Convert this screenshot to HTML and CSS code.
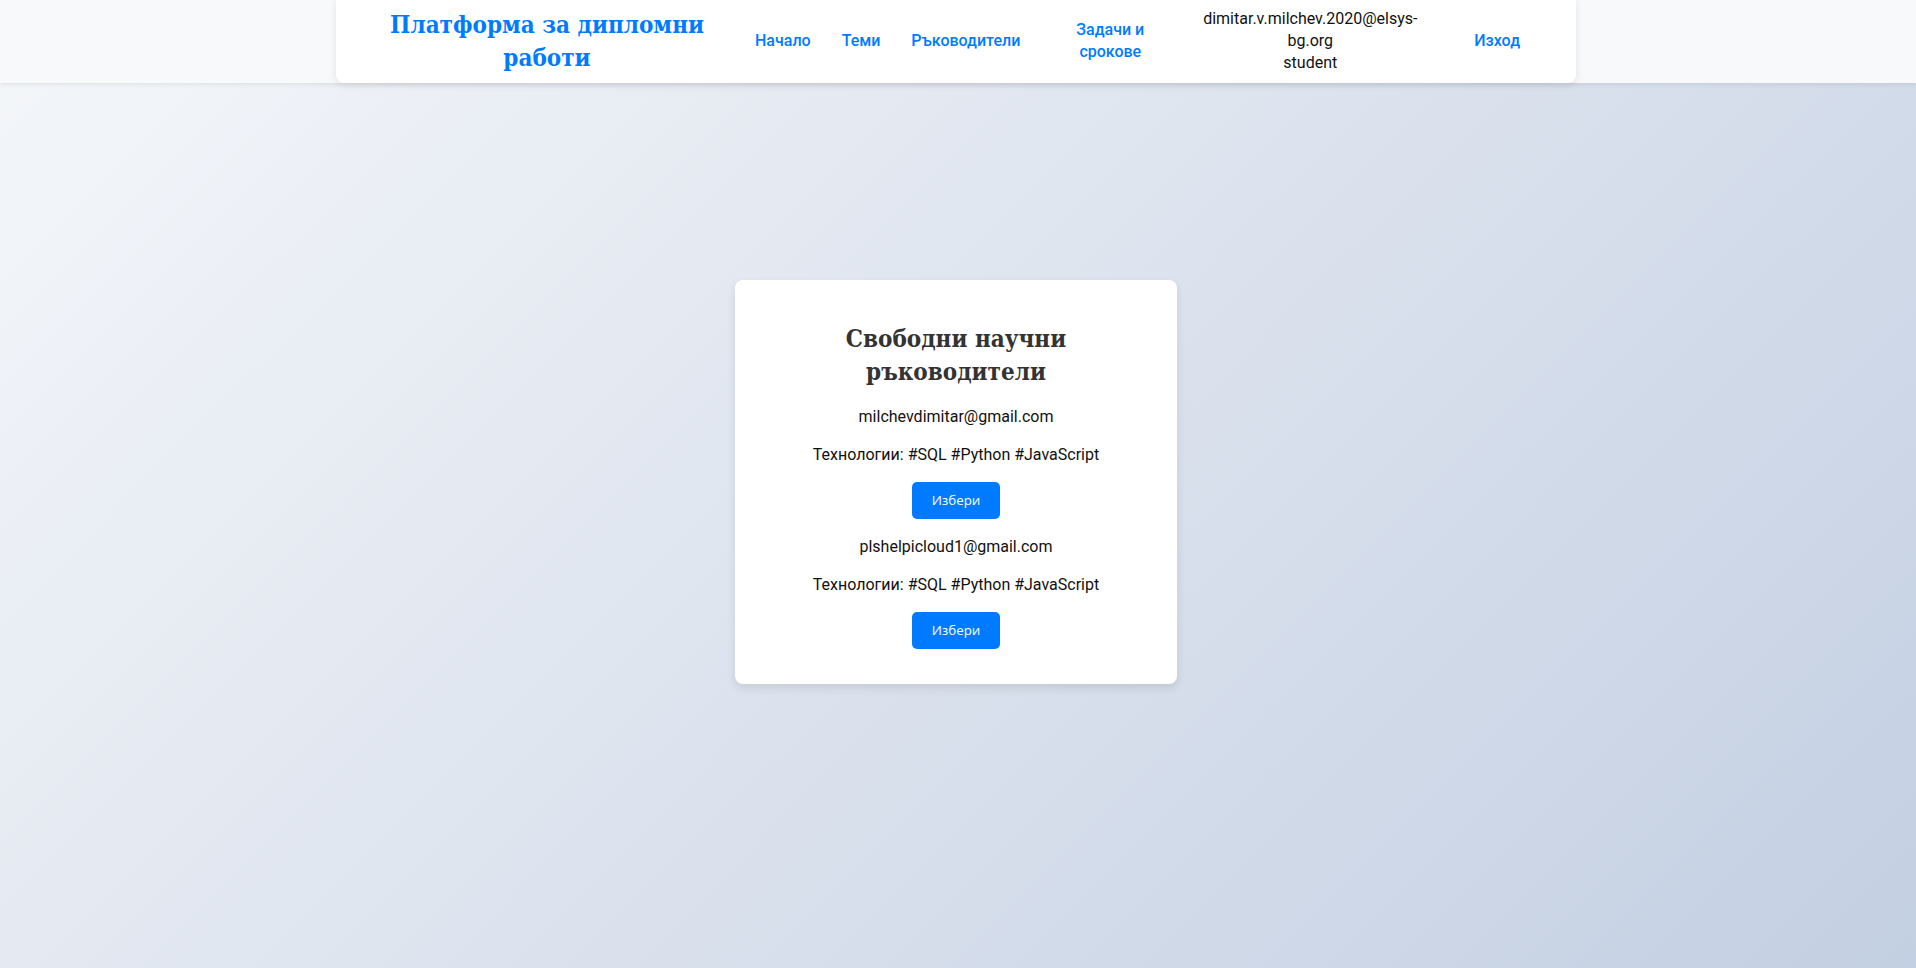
FILE: index.html
```html
<!DOCTYPE html>
<html lang="bg">
<head>
<meta charset="utf-8">
<title>Платформа за дипломни работи</title>
<link rel="stylesheet" href="styles.css">
</head>
<body>
<header class="header-bar">
  <div class="header-inner">
    <h1 class="brand">Платформа за дипломни работи</h1>
    <nav class="nav">
      <a class="nav-link" href="#">Начало</a>
      <a class="nav-link" href="#">Теми</a>
      <a class="nav-link" href="#">Ръководители</a>
      <a class="nav-link nav-tasks" href="#">Задачи и срокове</a>
      <div class="nav-user">
        <span class="user-email">dimitar.v.milchev.2020@elsys-bg.org</span>
        <span class="user-role">student</span>
      </div>
      <a class="nav-link nav-logout" href="#">Изход</a>
    </nav>
  </div>
</header>
<main class="main">
  <section class="card">
    <h2 class="card-title">Свободни научни ръководители</h2>
    <div class="supervisor">
      <p class="sup-email">milchevdimitar@gmail.com</p>
      <p class="sup-tech">Технологии: #SQL #Python #JavaScript</p>
      <button class="btn">Избери</button>
    </div>
    <div class="supervisor">
      <p class="sup-email">plshelpicloud1@gmail.com</p>
      <p class="sup-tech">Технологии: #SQL #Python #JavaScript</p>
      <button class="btn">Избери</button>
    </div>
  </section>
</main>
</body>
</html>
```
FILE: styles.css
```css
* {
  box-sizing: border-box;
}

html, body {
  margin: 0;
  padding: 0;
}

body {
  min-height: 100vh;
  font-family: Roboto, "Liberation Sans", sans-serif;
  font-size: 16px;
  color: #111;
  background: linear-gradient(135deg, #f5f7fa 0%, #c3cfe2 100%);
  background-attachment: fixed;
}

.header-bar {
  height: 83px;
  padding-right: 4px;
  background: #f8f9fa;
  box-shadow: 0 2px 4px rgba(0, 0, 0, 0.07);
}

.header-inner {
  width: 1240px;
  height: 83px;
  margin: 0 auto;
  background: #fff;
  border-radius: 0 0 8px 8px;
  box-shadow: 0 2px 8px rgba(0, 0, 0, 0.1);
  display: flex;
  align-items: center;
  padding-left: 46px;
  padding-bottom: 2px;
}

.brand {
  width: 330px;
  margin: 0;
  text-align: center;
  font-family: "DejaVu Serif Condensed", "DejaVu Serif", "Liberation Serif", serif;
  font-stretch: condensed;
  font-weight: bold;
  font-size: 24px;
  line-height: 33px;
  color: #007bff;
}

.nav {
  display: flex;
  align-items: center;
  margin-left: 43px;
  gap: 31px;
}

.nav-link {
  color: #007bff;
  text-decoration: none;
  font-weight: 500;
  font-size: 16px;
  line-height: 22px;
}

.nav-tasks {
  width: 80px;
  text-align: center;
  margin-left: 19px;
}

.nav-user {
  width: 230px;
  margin-left: 14px;
  display: flex;
  flex-direction: column;
  align-items: center;
  text-align: center;
  line-height: 22px;
  color: #111;
}

.nav-logout {
  margin-left: 18px;
}

.main {
  height: calc(100vh - 83px);
  padding-bottom: 88px;
  padding-right: 4px;
  display: flex;
  align-items: center;
  justify-content: center;
}

.card {
  width: 442px;
  background: #fff;
  border-radius: 8px;
  box-shadow: 0 4px 10px rgba(0, 0, 0, 0.1);
  padding: 32px 40px 35px;
  text-align: center;
  display: flex;
  flex-direction: column;
  gap: 17px;
}

.card-title {
  margin: 10px 0 1px;
  font-family: "DejaVu Serif Condensed", "DejaVu Serif", "Liberation Serif", serif;
  font-stretch: condensed;
  font-weight: bold;
  font-size: 24px;
  line-height: 33px;
  color: #333;
}

.supervisor {
  display: flex;
  flex-direction: column;
  align-items: center;
}

.sup-email,
.sup-tech {
  margin: 0;
  line-height: 22px;
}

.sup-tech {
  margin-top: 16px;
}

.btn {
  margin-top: 16px;
  width: 88px;
  height: 37px;
  border: none;
  border-radius: 5px;
  background: #007bff;
  color: #fff;
  font-family: "Open Sans", "Noto Sans", sans-serif;
  font-size: 13.33px;
  cursor: pointer;
}
```
